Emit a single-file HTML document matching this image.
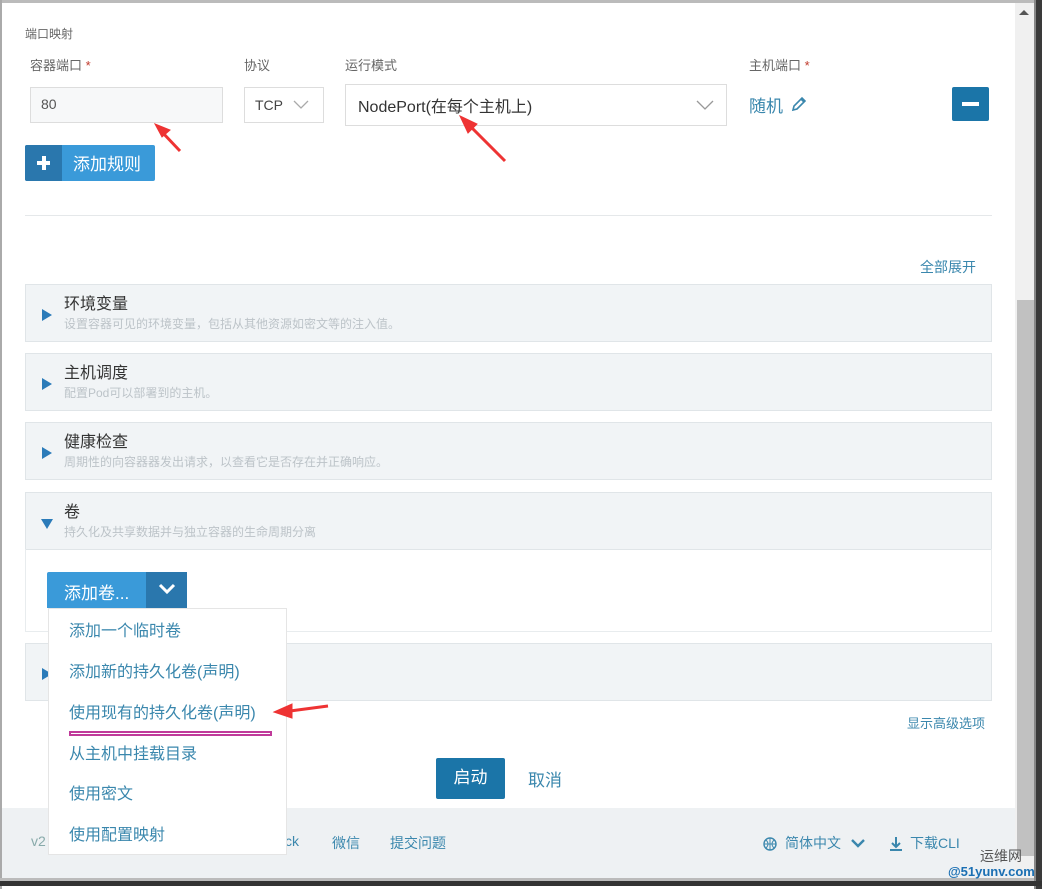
<!DOCTYPE html>
<html><head><meta charset="utf-8"><style>
*{margin:0;padding:0;box-sizing:border-box}
body{width:1042px;height:889px;position:relative;overflow:hidden;background:#fff;font-family:"Liberation Sans","Noto Sans CJK SC",sans-serif}
.a{position:absolute}
.lbl{font-size:13px;color:#666}
.req{color:#c0392b}
.panel{position:absolute;left:25px;width:967px;background:#f1f4f6;border:1px solid #e0e5e8}
.panel .t{position:absolute;left:38px;top:5px;font-size:16px;color:#333}
.panel .d{position:absolute;left:38px;top:30px;font-size:12px;color:#bcc3c8}
.tri{position:absolute;left:16px;top:24px;width:0;height:0;border-top:6px solid transparent;border-bottom:6px solid transparent;border-left:10px solid #2b7bb9}
.tri.down{border-left:6px solid transparent;border-right:6px solid transparent;border-top:10px solid #2b7bb9;border-bottom:0;top:26px;left:15px}
.link{color:#3a87ad}
.mi{position:absolute;left:20px;font-size:16px;color:#3a87ad}
.fl{position:absolute;top:833px;font-size:14px;color:#3a87ad}
</style></head><body>
<div class="a" style="left:0;top:0;width:1042px;height:3px;background:#bbb"></div>
<div class="a" style="left:0;top:0;width:2px;height:889px;background:#aaa"></div>
<div class="a" style="left:1015px;top:3px;width:19px;height:875px;background:#f0f0f0"></div>
<div class="a" style="left:1017px;top:300px;width:17px;height:556px;background:#c1c1c1"></div>
<div class="a" style="left:1019px;top:10px;width:0;height:0;border-left:5px solid transparent;border-right:5px solid transparent;border-bottom:5px solid #555"></div>
<div class="a" style="left:1034px;top:0;width:8px;height:889px;background:#3a3a3a;border-left:2px solid #888"></div>

<div class="a lbl" style="left:25px;top:25px;font-size:12px">端口映射</div>
<div class="a lbl" style="left:30px;top:55px">容器端口 <span class="req">*</span></div>
<div class="a lbl" style="left:244px;top:55px">协议</div>
<div class="a lbl" style="left:345px;top:55px">运行模式</div>
<div class="a lbl" style="left:749px;top:55px">主机端口 <span class="req">*</span></div>

<div class="a" style="left:30px;top:87px;width:193px;height:36px;border:1px solid #ddd;background:#f7f8f9;font-size:14px;color:#555;padding:8px 10px">80</div>
<div class="a" style="left:244px;top:87px;width:80px;height:36px;border:1px solid #ddd;font-size:14px;color:#444;padding:9px 10px">TCP</div>
<svg class="a" style="left:293px;top:100px" width="16" height="10"><path d="M1 1 L8 8 L15 1" fill="none" stroke="#aaa" stroke-width="1.3"/></svg>
<div class="a" style="left:345px;top:84px;width:382px;height:42px;border:1px solid #ddd;font-size:16px;color:#333;padding:8px 12px">NodePort(在每个主机上)</div>
<svg class="a" style="left:696px;top:99px" width="18" height="12"><path d="M1 2 L9 10 L17 2" fill="none" stroke="#999" stroke-width="1.3"/></svg>
<div class="a" style="left:749px;top:92px;font-size:17px;color:#3a87ad">随机</div>
<svg class="a" style="left:790px;top:96px" width="16" height="16"><path d="M3 14 L4 10 L12 2 L15 5 L7 13 Z M11 3 L14 6" fill="none" stroke="#3a87ad" stroke-width="1.6"/></svg>
<div class="a" style="left:952px;top:87px;width:37px;height:34px;background:#1b75a8;border-radius:2px"></div>
<div class="a" style="left:962px;top:102px;width:17px;height:4px;background:#fff"></div>

<div class="a" style="left:25px;top:145px;width:130px;height:36px;background:#3a9ad9;border-radius:2px"></div>
<div class="a" style="left:25px;top:145px;width:37px;height:36px;background:#2a77ad;border-radius:2px 0 0 2px"></div>
<div class="a" style="left:37px;top:161px;width:13px;height:4px;background:#fff"></div>
<div class="a" style="left:42px;top:156px;width:4px;height:14px;background:#fff"></div>
<div class="a" style="left:73px;top:150px;font-size:17px;color:#fff">添加规则</div>

<div class="a" style="left:25px;top:215px;width:967px;height:1px;background:#e5e8ea"></div>
<div class="a link" style="left:920px;top:257px;font-size:14px">全部展开</div>

<div class="panel" style="top:284px;height:58px"><div class="tri"></div><div class="t">环境变量</div><div class="d">设置容器可见的环境变量，包括从其他资源如密文等的注入值。</div></div>
<div class="panel" style="top:353px;height:58px"><div class="tri"></div><div class="t">主机调度</div><div class="d">配置Pod可以部署到的主机。</div></div>
<div class="panel" style="top:422px;height:58px"><div class="tri"></div><div class="t">健康检查</div><div class="d">周期性的向容器器发出请求，以查看它是否存在并正确响应。</div></div>
<div class="panel" style="top:492px;height:58px"><div class="tri down"></div><div class="t">卷</div><div class="d">持久化及共享数据并与独立容器的生命周期分离</div></div>
<div class="a" style="left:25px;top:549px;width:967px;height:83px;border:1px solid #e8ecee;border-top:0"></div>
<div class="panel" style="top:643px;height:58px"><div class="tri"></div></div>

<div class="a" style="left:47px;top:572px;width:140px;height:36px;background:#3a9ad9;border-radius:2px 2px 0 0"></div>
<div class="a" style="left:146px;top:572px;width:41px;height:36px;background:#2a77ad"></div>
<svg class="a" style="left:158px;top:583px" width="18" height="12"><path d="M2 2 L9 9 L16 2" fill="none" stroke="#fff" stroke-width="3"/></svg>
<div class="a" style="left:64px;top:579px;font-size:17px;color:#fff">添加卷...</div>

<div class="link a" style="left:907px;top:713px;font-size:13px">显示高级选项</div>

<div class="a" style="left:436px;top:758px;width:69px;height:41px;background:#1b75a8;border-radius:2px;color:#fff;font-size:17px;text-align:center;line-height:40px">启动</div>
<div class="a link" style="left:528px;top:766px;font-size:17px">取消</div>

<div class="a" style="left:2px;top:808px;width:1013px;height:70px;background:#eef1f3"></div>
<div class="a" style="left:0;top:878px;width:1034px;height:3px;background:#bbb"></div>
<div class="a" style="left:0;top:881px;width:1042px;height:5px;background:#333"></div>
<div class="fl" style="left:31px;color:#8aa">v2</div>
<div class="fl" style="left:285px">ck</div>
<div class="fl" style="left:332px">微信</div>
<div class="fl" style="left:390px">提交问题</div>
<svg class="a" style="left:763px;top:837px" width="14" height="14"><circle cx="7" cy="7" r="6" fill="none" stroke="#3a87ad" stroke-width="1.4"/><path d="M1 7 H13 M7 1 V13 M3 3 Q7 7 3 11 M11 3 Q7 7 11 11" fill="none" stroke="#3a87ad"/></svg>
<div class="fl" style="left:785px">简体中文</div>
<svg class="a" style="left:851px;top:839px" width="14" height="10"><path d="M1 1 L7 7 L13 1" fill="none" stroke="#3a87ad" stroke-width="2.4"/></svg>
<svg class="a" style="left:889px;top:836px" width="14" height="16"><path d="M7 1 V11 M3 7 L7 11 L11 7 M1 14 H13" fill="none" stroke="#3a87ad" stroke-width="2"/></svg>
<div class="fl" style="left:910px">下载CLI</div>
<div class="a" style="left:980px;top:846px;font-size:14px;color:#555">运维网</div>
<div class="a" style="left:948px;top:864px;font-size:13px;color:#1a6fb3;font-weight:bold">@51yunv.com</div>

<div class="a" style="left:48px;top:608px;width:239px;height:247px;background:#fff;border:1px solid #e5e5e5"></div>
<div class="mi a" style="left:69px;top:617px">添加一个临时卷</div>
<div class="mi a" style="left:69px;top:658px">添加新的持久化卷(声明)</div>
<div class="mi a" style="left:69px;top:699px">使用现有的持久化卷(声明)</div>
<div class="a" style="left:69px;top:731px;width:203px;height:5px;border:2px solid #c03a9a"></div>
<div class="mi a" style="left:69px;top:740px">从主机中挂载目录</div>
<div class="mi a" style="left:69px;top:780px">使用密文</div>
<div class="mi a" style="left:69px;top:821px">使用配置映射</div>

<svg class="a" style="left:0;top:0" width="1042" height="889">
<g fill="#e33" stroke="#e33">
<path d="M180 151 L162 132" stroke-width="3"/><path d="M155 124 L170 130 L162 137 Z"/>
<path d="M505 161 L470 126" stroke-width="3"/><path d="M460 116 L477 124 L468 133 Z"/>
<path d="M328 706 L290 711" stroke-width="3"/><path d="M274 712 L292 704 L292 718 Z"/>
</g></svg>
</body></html>
